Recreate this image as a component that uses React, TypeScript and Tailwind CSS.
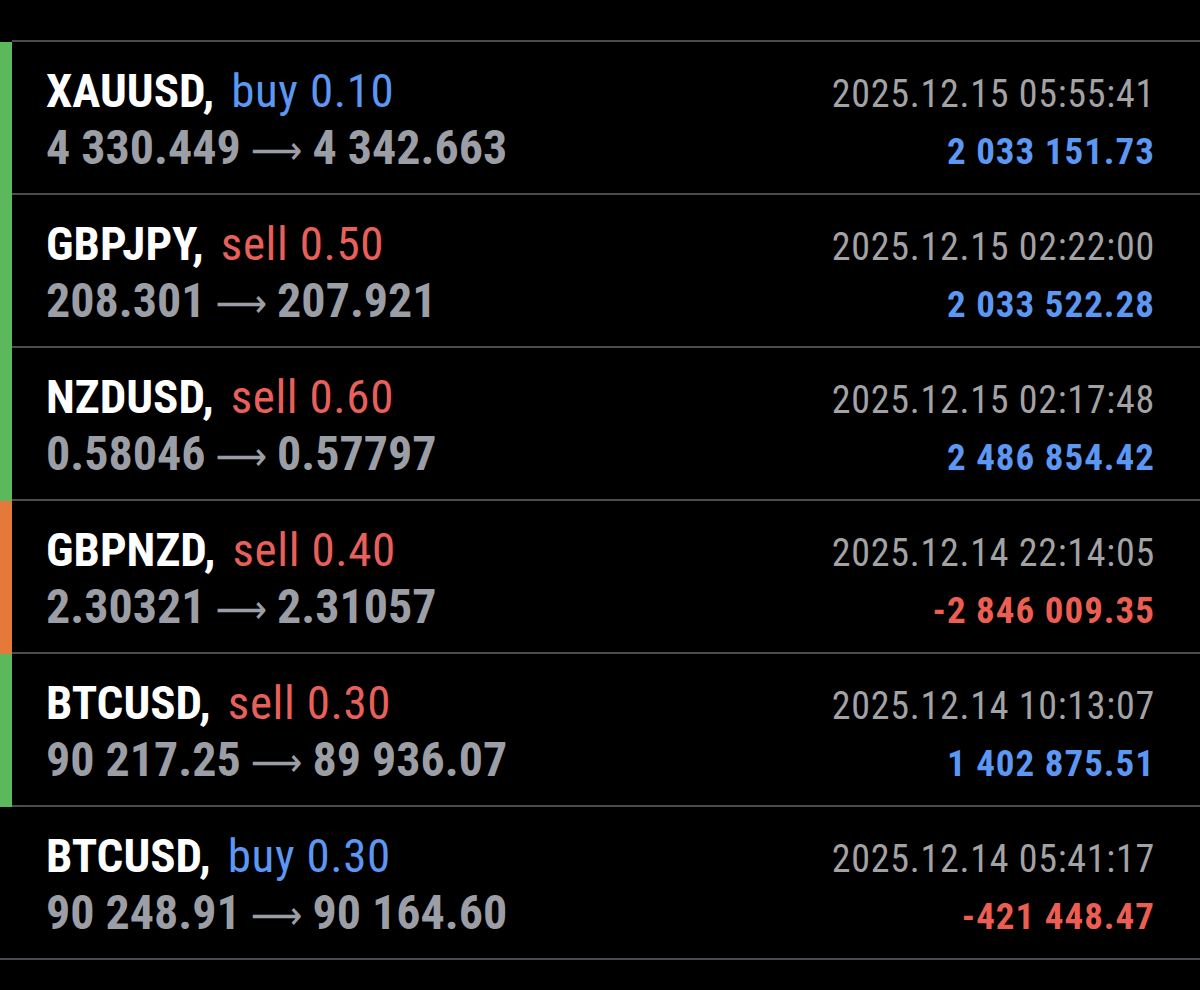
import React from "react";

type Trade = {
  sym: string;
  side: "buy" | "sell";
  vol: string;
  from: string;
  to: string;
  time: string;
  profit: string;
  bar: "green" | "orange" | "none";
};

const trades: Trade[] = [
  { sym: "XAUUSD", side: "buy", vol: "0.10", from: "4 330.449", to: "4 342.663", time: "2025.12.15 05:55:41", profit: "2 033 151.73", bar: "green" },
  { sym: "GBPJPY", side: "sell", vol: "0.50", from: "208.301", to: "207.921", time: "2025.12.15 02:22:00", profit: "2 033 522.28", bar: "green" },
  { sym: "NZDUSD", side: "sell", vol: "0.60", from: "0.58046", to: "0.57797", time: "2025.12.15 02:17:48", profit: "2 486 854.42", bar: "green" },
  { sym: "GBPNZD", side: "sell", vol: "0.40", from: "2.30321", to: "2.31057", time: "2025.12.14 22:14:05", profit: "-2 846 009.35", bar: "orange" },
  { sym: "BTCUSD", side: "sell", vol: "0.30", from: "90 217.25", to: "89 936.07", time: "2025.12.14 10:13:07", profit: "1 402 875.51", bar: "green" },
  { sym: "BTCUSD", side: "buy", vol: "0.30", from: "90 248.91", to: "90 164.60", time: "2025.12.14 05:41:17", profit: "-421 448.47", bar: "none" },
];

function Row({ t }: { t: Trade }) {
  const barCls =
    t.bar === "green" ? "w-[12px] bg-[#5cb85c]" : t.bar === "orange" ? "w-[12px] bg-[#e5793a]" : "";
  const sideCls = t.side === "buy" ? "text-[#5b97f3]" : "text-[#e8605a]";
  const neg = t.profit.startsWith("-");
  return (
    <div className="flex h-[153px]">
      {t.bar !== "none" && <div className={barCls} />}
      <div
        className={`flex-1 border-b-[2px] border-[#4b4c52] pt-[21px] pr-[45px] ${
          t.bar === "none" ? "pl-[46px]" : "pl-[34px]"
        }`}
      >
        <div className="flex h-[56px] items-baseline justify-between leading-[56px]">
          <div className="text-[47px]">
            <span className="font-bold text-white">{t.sym},</span>
            <span className="inline-block w-[17px]" />
            <span className={`${sideCls} tracking-[0.6px]`}>
              {t.side} {t.vol}
            </span>
          </div>
          <div className="text-[38px] tracking-[0.75px] text-[#a3a3a6]">{t.time}</div>
        </div>
        <div className="flex h-[57px] items-baseline justify-between leading-[57px]">
          <div className="text-[48px] font-bold text-[#9b9ea5]">
            {t.from}
            <span
              className="mx-[10px] inline-block text-[40px] font-normal"
              style={{ fontFamily: "'DejaVu Sans', sans-serif" }}
            >
              ⟶
            </span>
            {t.to}
          </div>
          <div
            className={`text-[37px] font-bold tracking-[1px] ${neg ? "text-[#ec5e52]" : "text-[#5b97f3]"}`}
          >
            {t.profit}
          </div>
        </div>
      </div>
    </div>
  );
}

export default function App() {
  return (
    <div
      className="h-[990px] w-[1200px] overflow-hidden bg-black pt-[40px] [font-stretch:condensed]"
      style={{ fontFamily: "'Roboto Condensed', Roboto, 'Noto Sans', sans-serif" }}
    >
      <div className="ml-[12px] h-[2px] bg-[#4b4c52]" />
      {trades.map((t, i) => (
        <Row key={i} t={t} />
      ))}
    </div>
  );
}
